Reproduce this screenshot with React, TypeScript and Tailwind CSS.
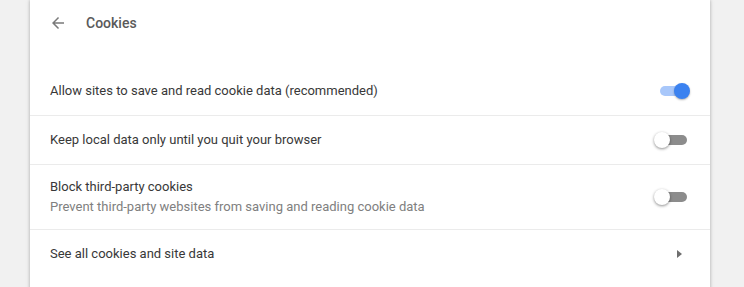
import React from "react";

function Toggle({ on }: { on: boolean }) {
  return (
    <div className="relative w-[34px] h-[16px] flex items-center">
      <div
        className={
          on
            ? "absolute left-[4px] right-[3px] h-[10px] rounded-full bg-[#a8c7fa]"
            : "absolute left-[4px] right-[1px] h-[10px] rounded-full bg-[#8c8c8c]"
        }
      />
      <div
        className={
          on
            ? "absolute right-0 w-[16px] h-[16px] rounded-full bg-[#3b82f0] shadow-[0_1px_2px_rgba(0,0,0,0.3)]"
            : "absolute left-0 w-[16px] h-[16px] rounded-full bg-white shadow-[0_1px_3px_rgba(0,0,0,0.45)]"
        }
      />
    </div>
  );
}

export default function App() {
  return (
    <div
      className="w-[744px] h-[287px] bg-[#f1f1f1] overflow-hidden flex"
      style={{ fontFamily: "Roboto, 'Liberation Sans', sans-serif" }}
    >
      <div className="ml-[30px] w-[680px] h-[300px] shrink-0 bg-white shadow-[0_0_3px_rgba(0,0,0,0.25),0_0_6px_rgba(0,0,0,0.08)] flex flex-col">
        <div className="h-[45px] flex items-center pl-[19px] pt-[1px]">
          <svg width="18" height="18" viewBox="0 0 24 24" className="text-[#7a7a7a]">
            <path d="M20 11H7.83l5.59-5.59L12 4l-8 8 8 8 1.41-1.41L7.83 13H20v-2z" fill="currentColor" />
          </svg>
          <span className="ml-[19px] text-[14px] font-medium text-[#5a5a5a]">Cookies</span>
        </div>
        <div className="h-[22px]" />
        <div className="h-[49px] flex items-center justify-between px-[20px] border-b border-[#ebebeb]">
          <span className="text-[13px] text-[#383838]">Allow sites to save and read cookie data (recommended)</span>
          <Toggle on />
        </div>
        <div className="h-[49px] flex items-center justify-between px-[20px] border-b border-[#ebebeb]">
          <span className="text-[13px] text-[#383838]">Keep local data only until you quit your browser</span>
          <div className="mr-[2px]">
            <Toggle on={false} />
          </div>
        </div>
        <div className="h-[65px] flex items-center justify-between px-[20px] border-b border-[#ebebeb]">
          <div className="flex flex-col leading-[20px]">
            <span className="text-[13px] text-[#383838]">Block third-party cookies</span>
            <span className="text-[13px] text-[#808080]">Prevent third-party websites from saving and reading cookie data</span>
          </div>
          <div className="mr-[2px]">
            <Toggle on={false} />
          </div>
        </div>
        <div className="h-[48px] flex items-center justify-between px-[20px]">
          <span className="text-[13px] text-[#383838]">See all cookies and site data</span>
          <svg width="5" height="8" viewBox="0 0 5 8" className="mr-[8px]">
            <path d="M0 0L5 4L0 8Z" fill="#6e6e6e" />
          </svg>
        </div>
      </div>
    </div>
  );
}
